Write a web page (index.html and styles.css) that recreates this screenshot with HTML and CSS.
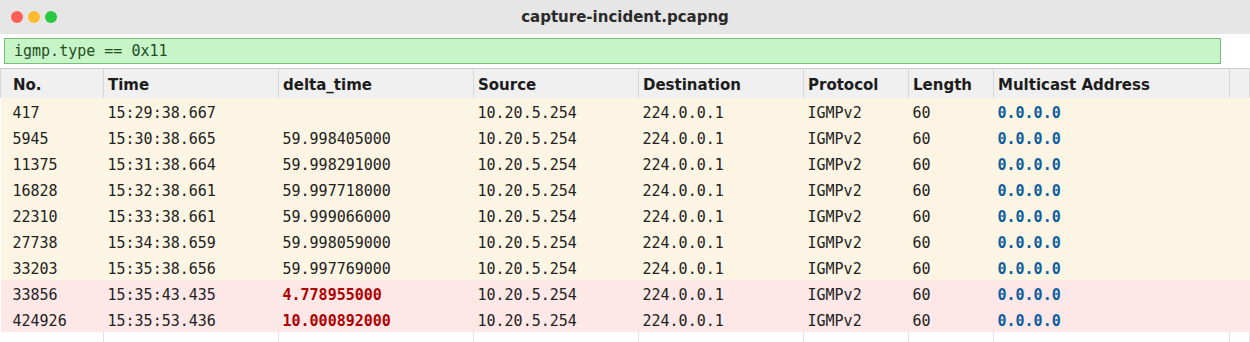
FILE: index.html
```html
<!DOCTYPE html>
<html lang="en">
<head>
  <meta charset="UTF-8" />
  <title>capture-incident.pcapng</title>
  <link rel="stylesheet" href="styles.css">
</head>
<body>
  <div class="titlebar">
    <div class="dots">
      <span class="dot red"></span>
      <span class="dot yellow"></span>
      <span class="dot green"></span>
    </div>
    <div class="title">capture-incident.pcapng</div>
  </div>

  <div class="filter-row">
    <div class="filter">igmp.type == 0x11</div>
  </div>

  <table class="packets">
    <colgroup>
      <col style="width: 103px">
      <col style="width: 175px">
      <col style="width: 195px">
      <col style="width: 165px">
      <col style="width: 165px">
      <col style="width: 105px">
      <col style="width: 85px">
      <col style="width: 236px">
      <col>
    </colgroup>
    <thead>
      <tr>
        <th class="first">No.</th>
        <th>Time</th>
        <th>delta_time</th>
        <th>Source</th>
        <th>Destination</th>
        <th>Protocol</th>
        <th>Length</th>
        <th>Multicast Address</th>
        <th></th>
      </tr>
    </thead>
    <tbody>
      <tr class="ok">
        <td class="first">417</td><td>15:29:38.667</td><td></td><td>10.20.5.254</td><td>224.0.0.1</td><td>IGMPv2</td><td>60</td><td class="addr">0.0.0.0</td><td></td>
      </tr>
      <tr class="ok">
        <td class="first">5945</td><td>15:30:38.665</td><td>59.998405000</td><td>10.20.5.254</td><td>224.0.0.1</td><td>IGMPv2</td><td>60</td><td class="addr">0.0.0.0</td><td></td>
      </tr>
      <tr class="ok">
        <td class="first">11375</td><td>15:31:38.664</td><td>59.998291000</td><td>10.20.5.254</td><td>224.0.0.1</td><td>IGMPv2</td><td>60</td><td class="addr">0.0.0.0</td><td></td>
      </tr>
      <tr class="ok">
        <td class="first">16828</td><td>15:32:38.661</td><td>59.997718000</td><td>10.20.5.254</td><td>224.0.0.1</td><td>IGMPv2</td><td>60</td><td class="addr">0.0.0.0</td><td></td>
      </tr>
      <tr class="ok">
        <td class="first">22310</td><td>15:33:38.661</td><td>59.999066000</td><td>10.20.5.254</td><td>224.0.0.1</td><td>IGMPv2</td><td>60</td><td class="addr">0.0.0.0</td><td></td>
      </tr>
      <tr class="ok">
        <td class="first">27738</td><td>15:34:38.659</td><td>59.998059000</td><td>10.20.5.254</td><td>224.0.0.1</td><td>IGMPv2</td><td>60</td><td class="addr">0.0.0.0</td><td></td>
      </tr>
      <tr class="ok">
        <td class="first">33203</td><td>15:35:38.656</td><td>59.997769000</td><td>10.20.5.254</td><td>224.0.0.1</td><td>IGMPv2</td><td>60</td><td class="addr">0.0.0.0</td><td></td>
      </tr>
      <tr class="bad">
        <td class="first">33856</td><td>15:35:43.435</td><td class="late">4.778955000</td><td>10.20.5.254</td><td>224.0.0.1</td><td>IGMPv2</td><td>60</td><td class="addr">0.0.0.0</td><td></td>
      </tr>
      <tr class="bad">
        <td class="first">424926</td><td>15:35:53.436</td><td class="late">10.000892000</td><td>10.20.5.254</td><td>224.0.0.1</td><td>IGMPv2</td><td>60</td><td class="addr">0.0.0.0</td><td></td>
      </tr>
      <tr class="filler">
        <td></td><td></td><td></td><td></td><td></td><td></td><td></td><td></td><td></td>
      </tr>
    </tbody>
  </table>
</body>
</html>
```

FILE: styles.css
```css
body {
  margin: 0;
  background: white;
  font-family: 'DejaVu Sans', sans-serif;
  color: #222;
  overflow: hidden;
}

.titlebar {
  height: 34px;
  background: #e6e6e6;
  display: flex;
  align-items: center;
  position: relative;
}

.dots {
  display: flex;
  gap: 5px;
  padding-left: 11px;
}

.dot {
  width: 12px;
  height: 12px;
  border-radius: 50%;
}

.red { background: #ff5f57; }
.yellow { background: #febc2e; }
.green { background: #28c840; }

.title {
  position: absolute;
  left: 0;
  right: 0;
  text-align: center;
  font-weight: bold;
  font-size: 15px;
  color: #2a2a2a;
}

.filter-row {
  padding: 4px 29px 4px 4px;
}

.filter {
  height: 24px;
  line-height: 25px;
  background: #c8f5c8;
  border: 1px solid #78bd78;
  padding-left: 9px;
  font-family: 'DejaVu Sans Mono', monospace;
  font-size: 15px;
  color: #1f4f1f;
}

.packets {
  width: 100%;
  border-collapse: collapse;
  table-layout: fixed;
}

.packets th {
  height: 26px;
  background: #f0f0f0;
  border-top: 1px solid #cccccc;
  border-right: 1px solid #d8d8d8;
  text-align: left;
  padding: 3px 4px 0;
  font-size: 15px;
  font-weight: bold;
  color: #1c1c1c;
  white-space: nowrap;
}

.packets th.first {
  border-left: 1px solid #d8d8d8;
}

.packets td {
  height: 23px;
  padding: 3px 4px 0;
  font-family: 'DejaVu Sans Mono', monospace;
  font-size: 15px;
  white-space: nowrap;
}

.packets .first {
  padding-left: 12px;
}

tr.ok td { background: #fdf5e3; }
tr.bad td { background: #fde7e7; }

td.late {
  color: #b00000;
  font-weight: bold;
}

td.addr {
  color: #0b5d9e;
  font-weight: bold;
}

tr.filler td {
  height: 10px;
  padding: 0;
  background: white;
  border-right: 1px solid #e2e2e2;
}
```
